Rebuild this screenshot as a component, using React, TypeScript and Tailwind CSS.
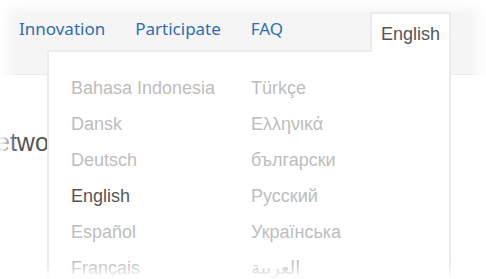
// Site header with the language dropdown opened over the page body.

const LEFT_COL = ["Bahasa Indonesia", "Dansk", "Deutsch", "English", "Español", "Français"];
const RIGHT_COL = ["Türkçe", "Ελληνικά", "български", "Русский", "Українська", "العربية"];

function LangItem({ label, active }: { label: string; active?: boolean }) {
  return (
    <li
      className={
        "h-9 leading-9 whitespace-nowrap " + (active ? "text-[#555555]" : "text-[#bdbdbd]")
      }
    >
      {label}
    </li>
  );
}

export default function App() {
  return (
    <div className="relative h-[279px] w-[486px] overflow-hidden bg-white">
      <header className="flex h-[75px] items-start border-b border-[#ececec] bg-[#f5f5f5] pl-[19px] pt-[16px]">
        <nav className="flex gap-[30px] font-['Noto_Sans',sans-serif] text-[17px] text-[#2f6db3]">
          <a>Innovation</a>
          <a>Participate</a>
          <a>FAQ</a>
        </nav>
      </header>

      <main className="pt-[52px]">
        <p className="-ml-[4px] font-['Liberation_Sans',sans-serif] text-[25px] leading-[30px] text-[#555555]">etwork</p>
      </main>

      {/* language switcher: tab + open panel */}
      <div className="absolute left-[47px] top-[12px] flex w-[404px] flex-col items-end font-['Liberation_Sans',sans-serif] text-[18px]">
        <div className="relative z-10 -mb-[2px] flex h-[40px] w-[81px] items-center justify-center border-2 border-b-0 border-[#ebebeb] bg-white pt-[3px] text-[#555555]">
          English
        </div>
        <div className="flex h-[240px] w-full border-2 border-[#ebebeb] bg-white pl-[22px] pt-[18px]">
          <ul className="w-[180px]">
            {LEFT_COL.map((l) => (
              <LangItem key={l} label={l} active={l === "English"} />
            ))}
          </ul>
          <ul className="font-['Liberation_Sans','DejaVu_Sans',sans-serif]">
            {RIGHT_COL.map((l) => (
              <LangItem key={l} label={l} />
            ))}
          </ul>
        </div>
      </div>

      {/* soft white vignette round the shot */}
      <div className="pointer-events-none absolute inset-0 shadow-[inset_0_0_12px_8px_#ffffff]" />
    </div>
  );
}
